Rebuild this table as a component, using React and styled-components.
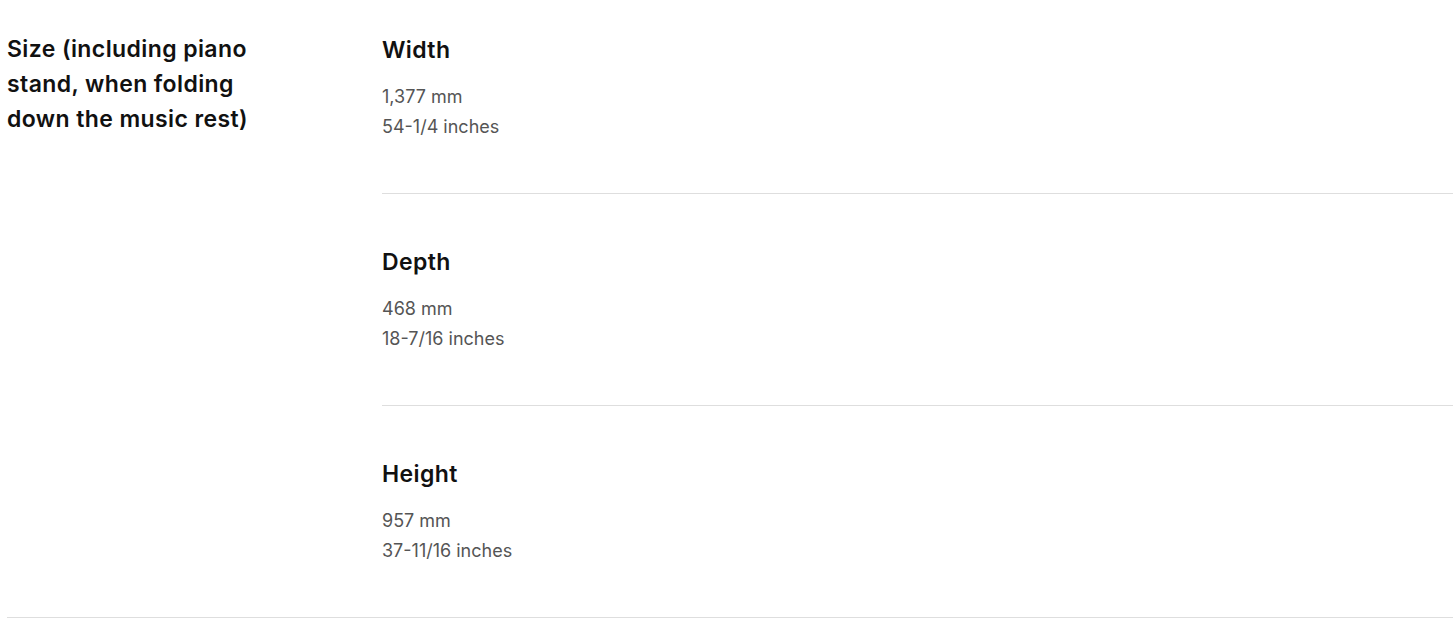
import styled, { createGlobalStyle } from "styled-components";

const GlobalStyle = createGlobalStyle`
	body {
		margin: 0;
		background: #fff;
		font-family: "Inter", "Noto Sans", sans-serif;
		color: #111;
	}
`;

const SpecRow = styled.section`
	display: grid;
	grid-template-columns: 375px 1fr;
	margin-left: 7px;
	width: 1446px;
	border-bottom: 1px solid #dedede;
	padding-top: 32px;
`;

const RowTitle = styled.h3`
	margin: 0;
	width: 265px;
	font-size: 23px;
	line-height: 35px;
	font-weight: 600;
	letter-spacing: 0.4px;
`;

const ItemList = styled.div`
	display: flex;
	flex-direction: column;
`;

const Item = styled.div`
	padding: ${(p) => (p.$first ? "4px" : "54px")} 0 51px;
	border-bottom: ${(p) => (p.$last ? "none" : "1px solid #dedede")};
`;

const ItemName = styled.h4`
	margin: 0 0 18px;
	font-size: 23px;
	line-height: 28px;
	font-weight: 600;
	letter-spacing: 0.4px;
`;

const ItemValue = styled.p`
	margin: 0;
	font-size: 18px;
	line-height: 30px;
	color: #555;
`;

const specs = [
	{ name: "Width", values: ["1,377 mm", "54-1/4 inches"] },
	{ name: "Depth", values: ["468 mm", "18-7/16 inches"] },
	{ name: "Height", values: ["957 mm", "37-11/16 inches"] },
];

export default function App() {
	return (
		<>
			<GlobalStyle />
			<SpecRow>
				<RowTitle>Size (including piano stand, when folding down the music rest)</RowTitle>
				<ItemList>
					{specs.map((s, i) => (
						<Item key={s.name} $first={i === 0} $last={i === specs.length - 1}>
							<ItemName>{s.name}</ItemName>
							{s.values.map((v) => (
								<ItemValue key={v}>{v}</ItemValue>
							))}
						</Item>
					))}
				</ItemList>
			</SpecRow>
		</>
	);
}
